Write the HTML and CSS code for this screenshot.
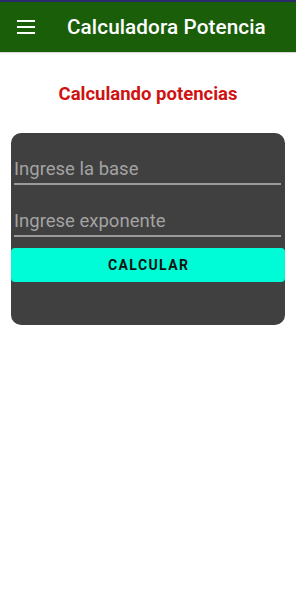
FILE: index.html
```html
<!DOCTYPE html>
<html lang="es">
<head>
<meta charset="utf-8">
<title>Calculadora Potencia</title>
<link rel="stylesheet" href="styles.css">
</head>
<body>
<div class="status"></div>
<header class="appbar">
  <svg class="menu" width="18" height="14" viewBox="0 0 18 14">
    <rect x="0" y="0" width="18" height="2" fill="#fff"/>
    <rect x="0" y="6" width="18" height="2" fill="#fff"/>
    <rect x="0" y="12" width="18" height="2" fill="#fff"/>
  </svg>
  <h1 class="title">Calculadora Potencia</h1>
</header>
<main class="content">
  <h2 class="heading">Calculando potencias</h2>
  <section class="card">
    <div class="field"><span class="placeholder">Ingrese la base</span></div>
    <div class="field"><span class="placeholder">Ingrese exponente</span></div>
    <button class="btn">CALCULAR</button>
  </section>
</main>
</body>
</html>
```
FILE: styles.css
```css
html, body {
  margin: 0;
  padding: 0;
  background: #fff;
  font-family: Roboto, "Liberation Sans", sans-serif;
}
.status {
  height: 2px;
  background: #2b2a6b;
}
.appbar {
  height: 50px;
  background: #1b5e0a;
  display: flex;
  align-items: center;
  padding-left: 17px;
  box-shadow: 0 1px 1px rgba(0,0,0,0.15);
}
.menu {
  display: block;
  flex: none;
}
.title {
  margin: 0 0 0 32px;
  color: #fff;
  font-size: 20.7px;
  font-weight: 500;
  letter-spacing: 0.1px;
}
.content {
  padding: 0 11px;
}
.heading {
  margin: 30px 0 0;
  text-align: center;
  color: #d01212;
  font-size: 18.5px;
  font-weight: 700;
  line-height: 24px;
}
.card {
  margin-top: 27px;
  background: #404040;
  border-radius: 10px;
  height: 192px;
  padding-top: 25px;
  box-sizing: border-box;
}
.field {
  margin: 0 4px 0 3px;
  height: 25px;
  border-bottom: 2px solid #9a9a9a;
  display: flex;
  align-items: flex-end;
  margin-bottom: 25px;
}
.field + .field {
  margin-bottom: 11px;
}
.placeholder {
  color: #a3a3a3;
  font-size: 18.5px;
  line-height: 22px;
  padding-bottom: 3px;
}
.btn {
  display: block;
  width: 100%;
  height: 34px;
  border: none;
  border-radius: 4px;
  background: #00fcd6;
  color: #111;
  font-family: Roboto, "Liberation Sans", sans-serif;
  font-size: 14px;
  font-weight: 700;
  letter-spacing: 1.4px;
  padding: 0 0 0 1.4px;
}
```
